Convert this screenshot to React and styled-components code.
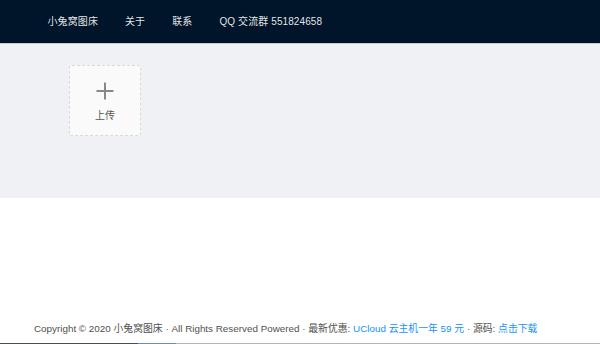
import React from 'react'
import styled, { createGlobalStyle } from 'styled-components'

const GlobalStyle = createGlobalStyle`
  * { box-sizing: border-box; }
  html, body { margin: 0; padding: 0; }
  body {
    font-family: "Liberation Sans", "Noto Sans CJK SC", sans-serif;
    background: #fff;
  }
`

const navItems = ['小兔窝图床', '关于', '联系', 'QQ 交流群 551824658']

const App = () => {
  return (
    <Layout>
      <GlobalStyle />
      <Header>
        <Menu>
          {navItems.map((item) => (
            <MenuItem key={item}>{item}</MenuItem>
          ))}
        </Menu>
      </Header>
      <Content>
        <UploadCard>
          <PlusIcon viewBox="0 0 18 18">
            <path d="M9 0.5v17M0.5 9h17" stroke="#888" strokeWidth="2" fill="none" />
          </PlusIcon>
          <UploadText>上传</UploadText>
        </UploadCard>
      </Content>
      <Spacer />
      <Footer>
        Copyright © 2020 小兔窝图床 · All Rights Reserved Powered · 最新优惠:{' '}
        <Link>UCloud 云主机一年 59 元</Link> · 源码: <Link>点击下载</Link>
      </Footer>
      <BottomStrip />
    </Layout>
  )
}

const Layout = styled.div`
  display: flex;
  flex-direction: column;
  height: 344px;
  overflow: hidden;
`

const Header = styled.header`
  height: 44px;
  flex-shrink: 0;
  background: #001529;
  border-bottom: 1px solid #c9ccd2;
  padding: 0 34px;
  display: flex;
  align-items: center;
`

const Menu = styled.nav`
  display: flex;
  align-items: center;
  height: 100%;
  margin-top: -3px;
`

const MenuItem = styled.div`
  padding: 0 13.5px;
  font-size: 10px;
  letter-spacing: 0.1px;
  color: rgba(255, 255, 255, 0.9);
  white-space: nowrap;
`

const Content = styled.main`
  height: 154px;
  flex-shrink: 0;
  background: #f0f1f5;
  padding: 21px 0 0 69px;
`

const UploadCard = styled.div`
  width: 72px;
  height: 71px;
  background: #fafafa;
  border: 1px dashed #d9d9d9;
  border-radius: 3px;
  display: flex;
  flex-direction: column;
  align-items: center;
  justify-content: center;
  gap: 7px;
`

const PlusIcon = styled.svg`
  width: 18px;
  height: 18px;
  margin-top: 2px;
`

const UploadText = styled.div`
  font-size: 10px;
  color: #555;
`

const Spacer = styled.div`
  flex: 1;
`

const Footer = styled.footer`
  padding: 0 34px 7px;
  font-size: 9.85px;
  line-height: 14px;
  color: #505050;
  white-space: nowrap;
`

const Link = styled.span`
  color: #1890ff;
`

const BottomStrip = styled.div`
  height: 1px;
  flex-shrink: 0;
  background: linear-gradient(
    to right,
    #4a5058 0,
    #4a5058 138px,
    #6a8cc0 138px,
    #6a8cc0 176px,
    #b4b4b4 176px
  );
`

export default App
